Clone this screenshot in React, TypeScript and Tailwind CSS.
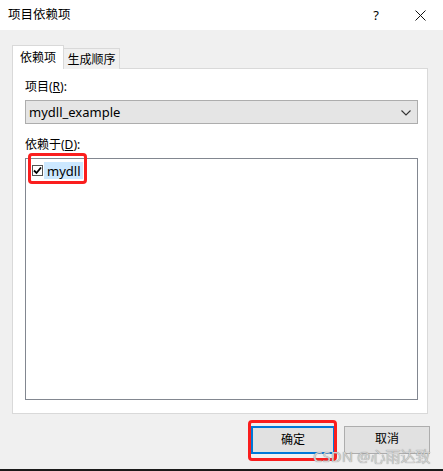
import React from "react";

const font = { fontFamily: '"Segoe UI", "Noto Sans", "Noto Sans CJK SC", sans-serif' };

export default function App() {
  return (
    <div className="w-[443px] h-[471px] flex flex-col bg-[#f0f0f0] text-[12px] text-black relative overflow-hidden" style={font}>
      {/* title bar */}
      <div className="h-[30px] bg-white flex items-center shrink-0">
        <span className="ml-[8px] leading-[16px] text-[12.5px]">项目依赖项</span>
        <span className="ml-auto mr-[36px] leading-[16px] text-[13px]">?</span>
        <svg width="11" height="11" viewBox="0 0 11 11" className="mr-[17px]">
          <path d="M0.5 0.5 L10.5 10.5 M10.5 0.5 L0.5 10.5" stroke="#111" strokeWidth="1" fill="none" />
        </svg>
      </div>
      {/* body */}
      <div className="flex-1 flex flex-col px-[12px] pt-[15px]">
        {/* tabs */}
        <div className="flex items-end h-[24px] relative z-10 -mb-px">
          <div className="w-[52px] h-[24px] bg-white border border-b-0 border-[#d9d9d9] flex items-center justify-center leading-[16px]">
            依赖项
          </div>
          <div className="w-[56px] h-[21px] bg-[#f0f0f0] border border-l-0 border-b-0 border-[#d9d9d9] flex items-center justify-center leading-[16px] pt-[2px]">
            生成顺序
          </div>
        </div>
        {/* panel */}
        <div className="w-[416px] h-[346px] bg-white border border-[#d9d9d9] pl-[12px] pr-[9px] pt-[10px] flex flex-col">
          <div className="h-[16px] leading-[16px]">
            项目(<span className="underline">R</span>):
          </div>
          <div className="mt-[5px] h-[24px] bg-[#e5e5e5] border border-[#adadad] flex items-center pl-[3px] pr-[6px]">
            <span className="leading-[16px] text-[13px]">mydll_example</span>
            <svg width="10" height="6" viewBox="0 0 10 6" className="ml-auto mt-[1px]">
              <path d="M0.5 0.5 L5 5 L9.5 0.5" stroke="#333" strokeWidth="1.1" fill="none" />
            </svg>
          </div>
          <div className="mt-[13px] h-[16px] leading-[16px]">
            依赖于(<span className="underline">D</span>):
          </div>
          <div className="mt-[5px] h-[242px] border border-[#828790] bg-white relative pt-[3px] pl-[6px]">
            <div className="flex items-center h-[17px]">
              <div className="w-[11px] h-[11px] border border-[#555] bg-white flex items-center justify-center">
                <svg width="9" height="9" viewBox="0 0 9 9">
                  <path d="M1 4.5 L3.5 7 L8 1.5" stroke="#000" strokeWidth="1.8" fill="none" />
                </svg>
              </div>
              <div className="ml-[1px] h-[17px] w-[39px] bg-[#cce8ff] flex items-center pl-[3px] text-[13px] leading-[16px]">
                mydll
              </div>
            </div>
          </div>
        </div>
        {/* buttons */}
        <div className="flex justify-end gap-[9px] mt-[12px] pr-[1px]">
          <div className="w-[84px] h-[28px] bg-[#e1e1e1] border-2 border-[#0078d7] flex items-center justify-center leading-[16px]">
            确定
          </div>
          <div className="w-[86px] h-[28px] bg-[#e1e1e1] border border-[#adadad] flex items-start justify-center pt-[4px] leading-[16px]">
            取消
          </div>
        </div>
      </div>
      <div className="h-[2px] bg-[#1a1a1a] shrink-0" />

      {/* red highlight frames */}
      <div className="absolute left-[28px] top-[153px] w-[59px] h-[31px] border-[3px] border-[#fa1e1e] rounded-[4px]" />
      <div className="absolute left-[248px] top-[420px] w-[89px] h-[41px] border-[3px] border-[#fa1e1e] rounded-[4px]" />

      {/* watermark */}
      <div
        className="absolute left-[313px] top-[447px] text-[15px] leading-[18px] text-[#d2d2d2] whitespace-nowrap"
        style={{ fontFamily: '"Noto Sans", "Noto Sans CJK SC", sans-serif', textShadow: "0 0 1px #7a7a7a" }}
      >
        CSDN @心雨达致
      </div>
    </div>
  );
}
